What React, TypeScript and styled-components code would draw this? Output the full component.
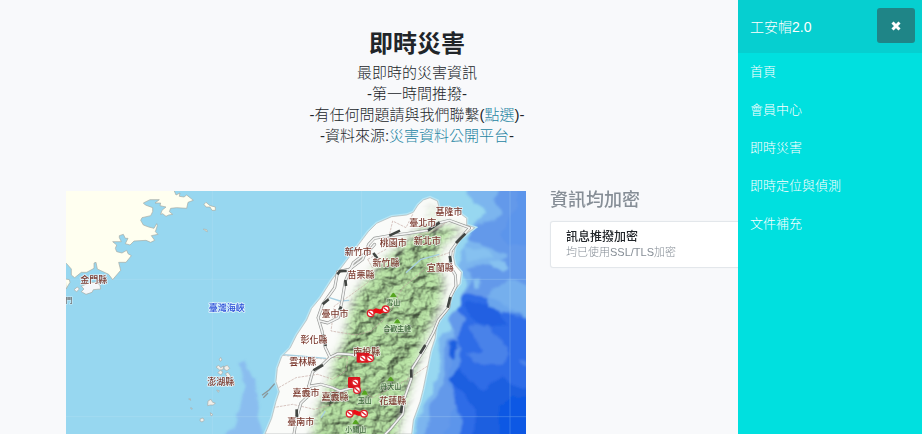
import React from "react";
import styled, { createGlobalStyle } from "styled-components";

const GlobalStyle = createGlobalStyle`
  *, *::before, *::after { box-sizing: border-box; }
  body {
    margin: 0;
    background: #f8f9fb;
    color: #212529;
    font-family: "Liberation Sans", "Noto Sans CJK TC", sans-serif;
    font-size: 15px;
    font-weight: 300;
  }
`;

const Page = styled.main`
  margin-right: 88px;
  padding: 30px 54px 0;
`;

const Intro = styled.header`
  margin-bottom: 45px;
  text-align: center;
`;

const Title = styled.h1`
  margin: 0 0 4px;
  font-size: 24px;
  font-weight: 700;
  line-height: 28px;
`;

const Lead = styled.p`
  margin: 0;
  line-height: 21px;
`;

const TextLink = styled.a`
  color: #2585a3;
  text-decoration: none;
`;

const Row = styled.div`
  display: grid;
  grid-template-columns: repeat(3, 1fr);
`;

const Column = styled.section<{ $span: number }>`
  grid-column: span ${(p) => p.$span};
  min-width: 0;
  padding: 0 12px;
`;

const SectionTitle = styled.h2`
  margin: 0 0 12px;
  color: #868e96;
  font-size: 18px;
  font-weight: 500;
  line-height: 18px;
`;

const Card = styled.article`
  padding: 8px 15px 7px;
  border: 1px solid #e3e7eb;
  border-radius: 3px;
  background: #fff;
  box-shadow: 0 0 1px #e3e7eb;
`;

const CardTitle = styled.h3`
  margin: 0;
  font-size: 12px;
  font-weight: 500;
  line-height: 15px;
`;

const CardText = styled.p`
  margin: 0;
  color: #868e96;
  font-size: 11px;
  line-height: 15px;
`;

const Sidebar = styled.aside`
  position: fixed;
  top: 0;
  right: 0;
  bottom: 0;
  width: 184px;
  background: #00e0df;
  color: #fff;
`;

const SidebarHeader = styled.div`
  display: flex;
  align-items: center;
  justify-content: space-between;
  padding: 8px 7px 10px 12px;
  background: #06cfd0;
`;

const Brand = styled.a`
  color: inherit;
  font-size: 14px;
  text-decoration: none;
`;

const CloseButton = styled.button`
  display: flex;
  align-items: center;
  justify-content: center;
  width: 38px;
  height: 35px;
  padding: 0;
  border: 0;
  border-radius: 3px;
  background: #1f8587;
  color: #fff;
  cursor: pointer;
`;

const NavList = styled.ul`
  margin: 0;
  padding: 0;
  list-style: none;
`;

const NavLink = styled.a`
  display: block;
  padding: 0 12px;
  color: #fff;
  font-size: 13px;
  line-height: 38px;
  text-decoration: none;
`;

const MapSvg = styled.svg`
  display: block;
  width: 100%;
  height: auto;
  font-family: "Noto Sans CJK TC", sans-serif;
  text-anchor: middle;
`;

const PlaceName = styled.text<{ $tone: string }>`
  fill: ${(p) => p.$tone};
  font-size: 27px;
  font-weight: 500;
  stroke: #fff;
  stroke-opacity: 0.7;
  stroke-width: 5px;
  stroke-linejoin: round;
  paint-order: stroke;
`;

const PeakName = styled(PlaceName)`
  font-size: 21px;
  stroke-opacity: 0.4;
`;

const places: [string, number, number][] = [
  ["金門縣", 83, 267],
  ["新竹市", 877, 182],
  ["苗栗縣", 885, 253],
  ["基隆市", 1149, 63],
  ["臺北市", 1070, 96],
  ["桃園市", 982, 156],
  ["新北市", 1084, 150],
  ["新竹縣", 960, 217],
  ["宜蘭縣", 1123, 232],
  ["臺中市", 807, 370],
  ["彰化縣", 744, 446],
  ["雲林縣", 710, 514],
  ["澎湖縣", 464, 572],
  ["嘉義市", 720, 605],
  ["嘉義縣", 807, 617],
  ["臺南市", 704, 694],
  ["南投縣", 902, 482],
  ["花蓮縣", 980, 631],
];

const peaks: [string, number, number][] = [
  ["雪山", 982, 335],
  ["合歡主峰", 994, 414],
  ["丹大山", 974, 587],
  ["玉山", 896, 628],
  ["小關山", 869, 716],
];

const closures: [number, number][] = [
  [914, 367],
  [959, 355],
  [890, 502],
  [912, 502],
  [868, 574],
  [873, 597],
  [851, 668],
  [894, 668],
];

const island =
  "M1042 64L1056 42 1072 27 1092 20 1114 30 1120 52 1148 48 1182 67 1202 82 1202 102 1226 110 1207 124 1182 144 1167 167 1162 197 1167 222 1186 244 1182 277 1162 302 1152 332 1144 357 1125 382 1112 402 1107 442 1094 482 1082 542 1072 592 1062 632 1042 687 1037 729H597L617 682 630 632 640 602 630 572 634 532 647 497 672 472 692 432 722 387 737 352 762 322 797 267 832 222 862 182 892 142 907 122 932 97 977 77 1022 72Z";

const westRoad =
  "M1210 110L1150 88 1110 98 1085 118 1020 128 970 134 925 142 908 160 890 205 850 235 815 242 806 290 770 340 756 380 768 420 778 470 792 499 768 522 740 543 728 586 738 604 705 636 692 680 684 729";
const innerRoad =
  "M926 160L908 180 862 215 838 270 828 330 817 380 785 396 762 390";
const crossRoad = "M792 499L815 488 850 490 890 496";
const southRoad = "M728 586L765 580 800 590 822 600 860 590";
const eastRoad =
  "M1210 112L1180 145 1155 180 1152 225 1168 252 1170 285 1153 318 1148 350 1118 386 1102 425 1072 480 1040 530 1035 566 1016 620 1010 670 975 712 958 729";

const darkRails = [
  "M970 134L1002 119",
  "M922 186L934 202",
  "M1086 119L1121 94",
  "M1170 156L1198 128",
  "M1151 195L1155 215",
  "M1153 318L1145 350",
  "M1062 488L1078 462",
  "M1036 535L1036 560",
  "M1005 666L1008 642",
  "M814 250L822 240 842 240",
  "M770 340L788 325",
  "M838 267L840 285",
  "M820 357L826 347",
  "M771 430L779 465",
  "M742 538L771 522",
  "M692 655L692 680",
];

const roads = [westRoad, innerRoad, crossRoad, southRoad, eastRoad];

const isles =
  "M460 505l4-6 4 8-5 4zM450 528l8-5 6 7 9-5-2 11-10 1zM474 527l10-4 7 9-8 7-8-4zM455 545l8-7 8 5-6 9zM478 548l8-4 8 11-7 7zM492 566l12 5 2 12-9 2zM452 597l8 2-3 5zM426 630l9-5 5 9 8 2-6 6-9 0-8 2zM433 665l8 6-6 4zM403 683l8-2 4 7-7 5-6-3zM368 624l5-1 1 5zM373 651l5 0 0 4z";

function DisasterMap() {
  return (
    <MapSvg viewBox="0 0 1380 729" role="img" aria-label="臺灣即時災害地圖">
      <defs>
        <clipPath id="island-clip">
          <path d={island} />
        </clipPath>
        <filter id="soft" x="-20%" y="-20%" width="140%" height="140%">
          <feGaussianBlur stdDeviation="14" />
        </filter>
        <filter id="depth" x="-5%" y="-5%" width="110%" height="110%">
          <feTurbulence type="fractalNoise" baseFrequency="0.014" numOctaves="3" seed="3" result="noise" />
          <feDisplacementMap in="SourceGraphic" in2="noise" scale="42" xChannelSelector="R" yChannelSelector="G" />
          <feGaussianBlur stdDeviation="3" />
        </filter>
        <filter id="relief" x="0" y="0" width="100%" height="100%" colorInterpolationFilters="sRGB">
          <feTurbulence type="fractalNoise" baseFrequency="0.02 0.024" numOctaves="4" seed="8" />
          <feDiffuseLighting surfaceScale="15" diffuseConstant="1.05" lightingColor="#b3dca0">
            <feDistantLight azimuth="225" elevation="62" />
          </feDiffuseLighting>
          <feComposite in2="SourceGraphic" operator="in" />
        </filter>
        <mask id="mountain-mask">
          <path
            filter="url(#soft)"
            fill="#fff"
            d="M1088 30L1112 72 1060 120 985 180 930 230 870 305 845 390 835 450 805 510 790 580 755 650 735 760H985L1015 650 1042 550 1080 440 1120 350 1135 270 1110 220 1125 165 1190 110 1130 105 1080 120 1100 62Z"
          />
        </mask>
      </defs>

      <rect width="1380" height="729" fill="#97d7f0" />
      <g filter="url(#depth)">
        <path fill="#7bb5ee" d="M1190 -40L1220 38 1264 72 1220 110 1215 135 1190 180 1180 225 1198 285 1174 330 1154 390 1138 430 1120 480 1105 530 1095 590 1070 650 1045 770H1430V-40Z" />
        <path fill="#6499ea" d="M1310 -40L1285 35 1305 62 1282 90 1210 120 1200 145 1265 165 1320 190 1285 225 1205 230 1215 275 1180 330 1150 385 1160 435 1125 515 1130 580 1095 640 1070 770H1430V-40Z" />
        <path fill="#86c1f0" d="M1194 170Q1220 184 1265 174L1285 192 1260 208 1210 212ZM1270 210L1315 208 1328 226 1300 248 1280 240ZM1215 268l26-2 8 16-18 6z" />
        <path fill="#5c95eb" d="M1365 -40L1340 55 1320 105 1300 132 1325 165 1430 180V420L1305 400 1250 390 1210 395 1180 430 1190 480 1145 535 1145 580 1180 610 1160 660 1130 770H1430V-40Z" />
        <path fill="#2f6ce7" d="M1180 320Q1215 288 1280 310L1330 355 1430 380V770H1170L1190 665 1160 630 1170 545 1195 520 1170 440 1195 395 1165 365Z" />
        <path fill="#2161e2" d="M1188 335Q1230 304 1282 345L1320 398 1270 410 1210 388Z" />
        <path fill="#4a82e9" d="M1212 415L1260 400 1285 430 1330 468 1338 495 1310 530 1240 520 1200 488 1245 468ZM1355 508l16-2 8 12-16 5z" />
        <path fill="#1b5ee0" d="M1160 452q14-10 16 20l-5 42q-14 2-19-18zM1150 560L1188 530 1205 565 1240 590 1315 560 1335 590 1430 590V770H1195L1240 680 1200 610Z" />
        <path fill="#0759e4" d="M1430 610L1330 620 1305 650 1310 690 1290 770H1430Z" />
        <path fill="#79b4ee" d="M1270 300V342L1310 370 1345 362 1430 385V275L1325 268Z" opacity="0.8" />
        <path fill="#8abdef" d="M520 516L535 507 550 530 567 557 570 592 577 642 600 770H442L502 712 517 662 532 592 534 552Z" />
      </g>

      <g stroke="#c4e7f5" strokeWidth="2" opacity="0.35">
        <path d="M0 265H1380M0 677H1380M439 0V729M887 0V729M1332 0V729" />
      </g>

      <g stroke="#a7a9a0" strokeWidth="2" strokeLinejoin="round" transform="translate(-18 -18)">
        <path fill="#fffff0" d="M16 16H342L348 30 360 24 358 34 372 36 380 30 400 46 384 52 380 70 350 68 332 70 328 80 338 88 326 90 318 94 308 86 302 88 306 76 318 66 300 62 302 54 285 54 298 44 270 44 250 54 256 60 278 68 278 80 272 92 246 98 242 106 250 120 266 126 282 130 290 116 292 122 286 140 294 148 274 152 284 166 272 172 258 166 222 168 210 180 196 176 204 160 196 160 190 148 178 152 178 158 184 170 158 170 170 180 166 190 170 200 186 204 200 196 204 206 214 212 198 232 176 232 182 256 158 284 146 268 112 252 108 232 102 234 102 250 80 262 64 262 44 278 34 270 34 252 20 236 16 232ZM16 282L28 284 30 292 18 312ZM432 58L438 52 450 62 466 66 466 76 456 76 450 66 438 66ZM430 132L440 134 442 140 434 136Z" />
        <path fill="#f5f7fa" d="M64 304L90 292 108 292 120 300 122 312 100 314 96 322 78 328 64 320 72 312ZM42 314L52 306 58 312 50 320Z" />
      </g>
      <path d={isles} fill="#f1efea" stroke="#a4aaa9" strokeWidth="2" />

      <path d={island} fill="none" stroke="#b8e6f5" strokeWidth="10" />
      <path d={island} fill="#fafbf9" stroke="#b0b3b2" strokeWidth="2" />
      <path d="M588 613L610 596 626 578M592 620l14-14" fill="none" stroke="#8b9699" strokeWidth="4" />
      <g clipPath="url(#island-clip)">
        <g mask="url(#mountain-mask)">
          <rect x="590" width="650" height="729" filter="url(#relief)" />
        </g>
        <g fill="none" stroke="#c5aaa5" strokeWidth="2" strokeDasharray="8 3">
          <path d="M905 205L925 240 905 275 850 315 805 345 795 420 870 432 915 420 965 375 1010 290 1070 240 1105 200 1165 180M640 492L700 498 790 505M638 590L690 560 755 550 800 565 840 540 845 500 792 499M620 650L680 640 745 655 800 640 850 570 920 620 1000 580 1085 525M1040 70L1020 110 980 90 960 175 905 205M1040 140L1100 120 1150 88" />
        </g>
        <path d="M642 490L700 495 780 502M790 320L822 330 850 328M1020 245L1065 205 1120 190M765 680L778 660" fill="none" stroke="#a8cfe0" strokeWidth="4" />
      </g>

      <g fill="none" strokeLinecap="round" strokeLinejoin="round">
        {roads.map((d) => (
          <path key={d} d={d} stroke="#969896" strokeWidth="9" />
        ))}
        {roads.map((d) => (
          <path key={d} d={d} stroke="#f2f3f2" strokeWidth="5" />
        ))}
        {darkRails.map((d) => (
          <path key={d} d={d} stroke="#414542" strokeWidth="8" strokeLinecap="butt" />
        ))}
      </g>

      {places.map(([name, x, y]) => (
        <PlaceName key={name} $tone="#7b3a2f" x={x} y={y + 9}>
          {name}
        </PlaceName>
      ))}
      <PlaceName $tone="#274bd8" x={482} y={361}>
        臺灣海峽
      </PlaceName>
      <PeakName $tone="#6c6c6c" x={9} y={337}>
        門
      </PeakName>
      {peaks.map(([name, x, y]) => (
        <g key={name}>
          <path
            d={`M${x - 10} ${y - 17}L${x - 4} ${y - 27} ${x} ${y - 30} ${x + 4} ${y - 27} ${x + 10} ${y - 17}Z`}
            fill="#55a41f"
          />
          <PeakName $tone="#3f6a3c" x={x} y={y + 7}>
            {name}
          </PeakName>
        </g>
      ))}

      <rect x="872" y="485" width="38" height="30" rx="4" fill="#d8141d" />
      <rect x="846" y="558" width="37" height="33" rx="4" fill="#d8141d" />
      <path d="M914 367L930 359 942 362 959 355M851 668L866 663 878 668 894 668M868 574L873 597" fill="none" stroke="#ec0b12" strokeWidth="13" />
      {closures.map(([x, y]) => (
        <g key={`${x}-${y}`} transform={`translate(${x} ${y})`}>
          <circle r="10" fill="#fff" stroke="#df2029" strokeWidth="4" />
          <path d="M-6-5L6 5" stroke="#df2029" strokeWidth="4" />
        </g>
      ))}
    </MapSvg>
  );
}

const navItems = ["首頁", "會員中心", "即時災害", "即時定位與偵測", "文件補充"];

export default function App() {
  return (
    <>
      <GlobalStyle />
      <Page>
        <Intro>
          <Title>即時災害</Title>
          <Lead>最即時的災害資訊</Lead>
          <Lead>-第一時間推撥-</Lead>
          <Lead>
            -有任何問題請與我們聯繫(<TextLink href="#contact">點選</TextLink>)-
          </Lead>
          <Lead>
            -資料來源:<TextLink href="#source">災害資料公開平台</TextLink>-
          </Lead>
        </Intro>
        <Row>
          <Column $span={2}>
            <DisasterMap />
          </Column>
          <Column $span={1}>
            <SectionTitle>資訊均加密</SectionTitle>
            <Card>
              <CardTitle>訊息推撥加密</CardTitle>
              <CardText>均已使用SSL/TLS加密</CardText>
            </Card>
          </Column>
        </Row>
      </Page>
      <Sidebar>
        <SidebarHeader>
          <Brand href="#home">工安帽2.0</Brand>
          <CloseButton type="button" aria-label="關閉選單">
            <svg width="10" height="10" viewBox="0 0 10 10" aria-hidden="true">
              <path d="M1.5 1.5L8.5 8.5M8.5 1.5L1.5 8.5" stroke="currentColor" strokeWidth="3" />
            </svg>
          </CloseButton>
        </SidebarHeader>
        <nav aria-label="主選單">
          <NavList>
            {navItems.map((item) => (
              <li key={item}>
                <NavLink href={`#${item}`}>{item}</NavLink>
              </li>
            ))}
          </NavList>
        </nav>
      </Sidebar>
    </>
  );
}
